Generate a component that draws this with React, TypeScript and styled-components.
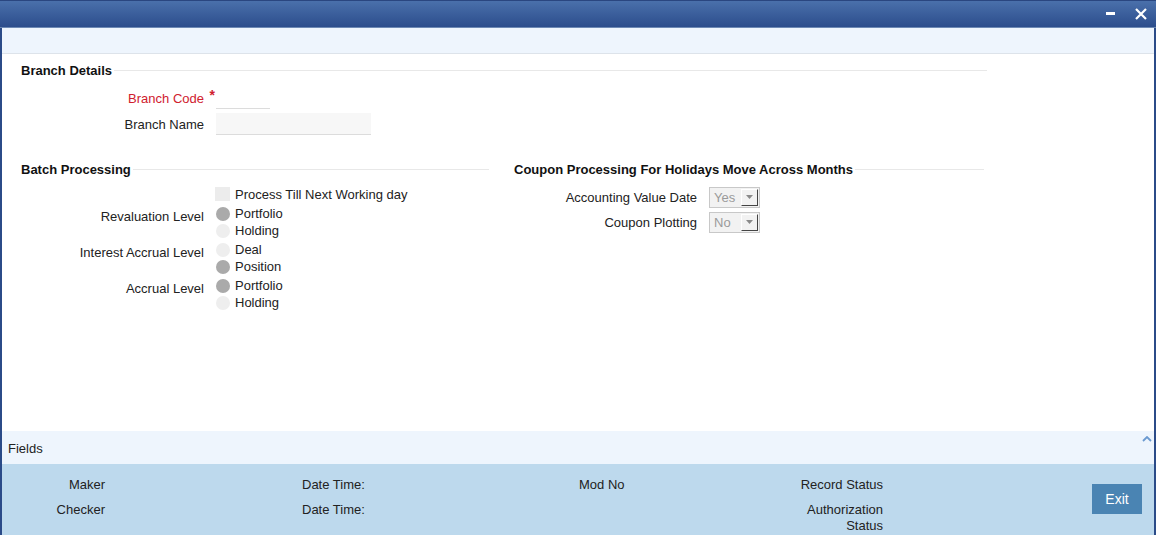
import React from "react";
import styled, { createGlobalStyle } from "styled-components";

const Global = createGlobalStyle`
  html, body { margin: 0; padding: 0; background: #ffffff; }
  body { font-family: "Liberation Sans", Arial, sans-serif; font-size: 13px; color: #222; }
  * { box-sizing: border-box; }
`;

const Window = styled.div`
  width: 1156px;
  height: 535px;
  display: flex;
  flex-direction: column;
  border-left: 2px solid #2b4b88;
  border-right: 2px solid #2b4b88;
  background: #fff;
`;

const TitleBar = styled.div`
  height: 28px;
  flex: none;
  margin: 0 -2px;
  background: linear-gradient(#4a70ab, #2c4d8c);
  border-top: 1px solid #2a4680;
  border-bottom: 1px solid #6d89b4;
  display: flex;
  align-items: center;
  justify-content: flex-end;
  gap: 17px;
  padding-right: 8px;
`;

const WinButton = styled.button`
  background: none;
  border: none;
  padding: 0;
  width: 14px;
  height: 14px;
  display: flex;
  align-items: center;
  justify-content: center;
  cursor: pointer;
`;

const Toolbar = styled.div`
  height: 26px;
  flex: none;
  background: #eef5fd;
  border-bottom: 1px solid #dde3ea;
`;

const Content = styled.div`
  flex: 1;
  padding-top: 8px;
  display: flex;
  flex-direction: column;
`;

const SectionHeader = styled.div<{ $end: number }>`
  display: flex;
  align-items: center;
  gap: 2px;
  width: ${(p) => p.$end}px;
  height: 16px;
  font-weight: bold;
  font-size: 13px;
  color: #111;
  white-space: nowrap;
  &::after {
    content: "";
    flex: 1;
    height: 1px;
    background: #e8e8e8;
  }
`;

const LeftHeader = styled(SectionHeader)`
  padding-left: 19px;
`;

const Rows = styled.div<{ $gap: number; $top: number }>`
  display: flex;
  flex-direction: column;
  gap: ${(p) => p.$gap}px;
  margin-top: ${(p) => p.$top}px;
`;

const Row = styled.div`
  display: flex;
  align-items: center;
  height: 22px;
`;

const Label = styled.div<{ $w: number; $req?: boolean }>`
  width: ${(p) => p.$w}px;
  flex: none;
  text-align: right;
  color: ${(p) => (p.$req ? "#d0202e" : "#222")};
  padding-right: 12px;
  white-space: nowrap;
  position: relative;
`;

const Star = styled.span`
  position: absolute;
  right: 1px;
  top: -4px;
  color: #d0202e;
  font-size: 14px;
  font-weight: bold;
`;

const TextInput = styled.div<{ $w: number; $bg: string }>`
  width: ${(p) => p.$w}px;
  height: 22px;
  background: ${(p) => p.$bg};
  border-bottom: 1px solid #dcdcdc;
`;

const Columns = styled.div`
  display: flex;
  margin-top: 26px;
`;

const LeftCol = styled.div`
  width: 512px;
  flex: none;
`;

const RightCol = styled.div`
  flex: none;
`;

const OptionRow = styled.div`
  display: flex;
  align-items: center;
  height: 17px;
  gap: 5px;
  white-space: nowrap;
`;

const CheckRow = styled(OptionRow)`
  height: 18px;
  padding-left: 213px;
  gap: 5px;
`;

const Check = styled.span`
  width: 15px;
  height: 14px;
  background: #ececec;
  display: inline-block;
`;

const Group = styled.div`
  display: flex;
  align-items: flex-start;
`;

const GroupLabel = styled(Label)`
  padding-top: 3px;
  line-height: 17px;
`;

const Options = styled.div`
  display: flex;
  flex-direction: column;
`;

const Radio = styled.span<{ $on?: boolean }>`
  width: 14px;
  height: 14px;
  border-radius: 50%;
  background: ${(p) => (p.$on ? "#aaaaaa" : "#eeeeee")};
  display: inline-block;
  flex: none;
`;

const Select = styled.div`
  width: 51px;
  height: 21px;
  border: 1px solid #c8c8c8;
  background: #f2f2f2;
  display: flex;
  align-items: center;
  justify-content: space-between;
  padding: 0 1px 0 4px;
  color: #9a9a9a;
  font-size: 13px;
`;

const SelectBtn = styled.span`
  width: 17px;
  height: 17px;
  background: #f2f2f2;
  border-top: 1px solid #fff;
  border-left: 1px solid #fff;
  border-right: 1px solid #444;
  border-bottom: 1px solid #444;
  display: flex;
  align-items: center;
  justify-content: center;
`;

const FieldsBar = styled.div`
  height: 33px;
  flex: none;
  background: #eef5fd;
  display: flex;
  align-items: center;
  justify-content: space-between;
  padding: 2px 2px 0 6px;
  font-size: 13px;
  color: #222;
`;

const Caret = styled.span`
  align-self: flex-start;
  margin-top: 3px;
  display: flex;
`;

const Footer = styled.div`
  height: 71px;
  flex: none;
  background: #bdd9ed;
  display: flex;
  align-items: flex-start;
`;

const Audit = styled.div`
  display: grid;
  grid-template-columns: 103px 474px 214px 90px;
  row-gap: 9px;
  padding-top: 13px;
  line-height: 16px;
`;

const AuditCell = styled.div<{ $align: "left" | "right"; $pad?: number }>`
  text-align: ${(p) => p.$align};
  padding-left: ${(p) => p.$pad ?? 0}px;
  color: #222;
`;

const ExitButton = styled.button`
  margin-left: 209px;
  margin-top: 20px;
  width: 50px;
  height: 30px;
  border: none;
  background: #4a84b3;
  color: #fff;
  font-family: "Liberation Sans", Arial, sans-serif;
  font-size: 14px;
  cursor: pointer;
`;

const Arrow = () => (
  <svg width="7" height="4" viewBox="0 0 7 4">
    <path d="M0 0h7L3.5 4z" fill="#8a8a8a" />
  </svg>
);

const SelectBox = ({ value }: { value: string }) => (
  <Select>
    <span>{value}</span>
    <SelectBtn>
      <Arrow />
    </SelectBtn>
  </Select>
);

export default function App() {
  return (
    <>
      <Global />
      <Window>
        <TitleBar>
          <WinButton aria-label="minimize">
            <svg width="9" height="4" viewBox="0 0 9 4">
              <rect x="0" y="0" width="9" height="3" fill="#fff" />
            </svg>
          </WinButton>
          <WinButton aria-label="close">
            <svg width="12" height="12" viewBox="0 0 12 12">
              <path d="M1 1L11 11M11 1L1 11" stroke="#fff" strokeWidth="2.2" />
            </svg>
          </WinButton>
        </TitleBar>
        <Toolbar />
        <Content>
          <LeftHeader $end={985}>Branch Details</LeftHeader>
          <Rows $gap={4} $top={9}>
            <Row>
              <Label $w={214} $req>
                Branch Code<Star>*</Star>
              </Label>
              <TextInput $w={54} $bg="#ffffff" />
            </Row>
            <Row>
              <Label $w={214}>Branch Name</Label>
              <TextInput $w={155} $bg="#f7f7f7" />
            </Row>
          </Rows>
          <Columns>
            <LeftCol>
              <LeftHeader $end={487}>Batch Processing</LeftHeader>
              <Rows $gap={2} $top={8}>
                <CheckRow>
                  <Check />
                  Process Till Next Working day
                </CheckRow>
                <Group>
                  <GroupLabel $w={214}>Revaluation Level</GroupLabel>
                  <Options>
                    <OptionRow><Radio $on />Portfolio</OptionRow>
                    <OptionRow><Radio />Holding</OptionRow>
                  </Options>
                </Group>
                <Group>
                  <GroupLabel $w={214}>Interest Accrual Level</GroupLabel>
                  <Options>
                    <OptionRow><Radio />Deal</OptionRow>
                    <OptionRow><Radio $on />Position</OptionRow>
                  </Options>
                </Group>
                <Group>
                  <GroupLabel $w={214}>Accrual Level</GroupLabel>
                  <Options>
                    <OptionRow><Radio $on />Portfolio</OptionRow>
                    <OptionRow><Radio />Holding</OptionRow>
                  </Options>
                </Group>
              </Rows>
            </LeftCol>
            <RightCol>
              <SectionHeader $end={470}>Coupon Processing For Holidays Move Across Months</SectionHeader>
              <Rows $gap={3} $top={9}>
                <Row>
                  <Label $w={195}>Accounting Value Date</Label>
                  <SelectBox value="Yes" />
                </Row>
                <Row>
                  <Label $w={195}>Coupon Plotting</Label>
                  <SelectBox value="No" />
                </Row>
              </Rows>
            </RightCol>
          </Columns>
        </Content>
        <FieldsBar>
          <span>Fields</span>
          <Caret>
            <svg width="10" height="6" viewBox="0 0 10 6">
              <path d="M1 5L5 1L9 5" stroke="#6b9ad0" strokeWidth="1.8" fill="none" />
            </svg>
          </Caret>
        </FieldsBar>
        <Footer>
          <Audit>
            <AuditCell $align="right">Maker</AuditCell>
            <AuditCell $align="left" $pad={197}>Date Time:</AuditCell>
            <AuditCell $align="left">Mod No</AuditCell>
            <AuditCell $align="right">Record Status</AuditCell>
            <AuditCell $align="right">Checker</AuditCell>
            <AuditCell $align="left" $pad={197}>Date Time:</AuditCell>
            <AuditCell $align="left"></AuditCell>
            <AuditCell $align="right">Authorization Status</AuditCell>
          </Audit>
          <ExitButton>Exit</ExitButton>
        </Footer>
      </Window>
    </>
  );
}
